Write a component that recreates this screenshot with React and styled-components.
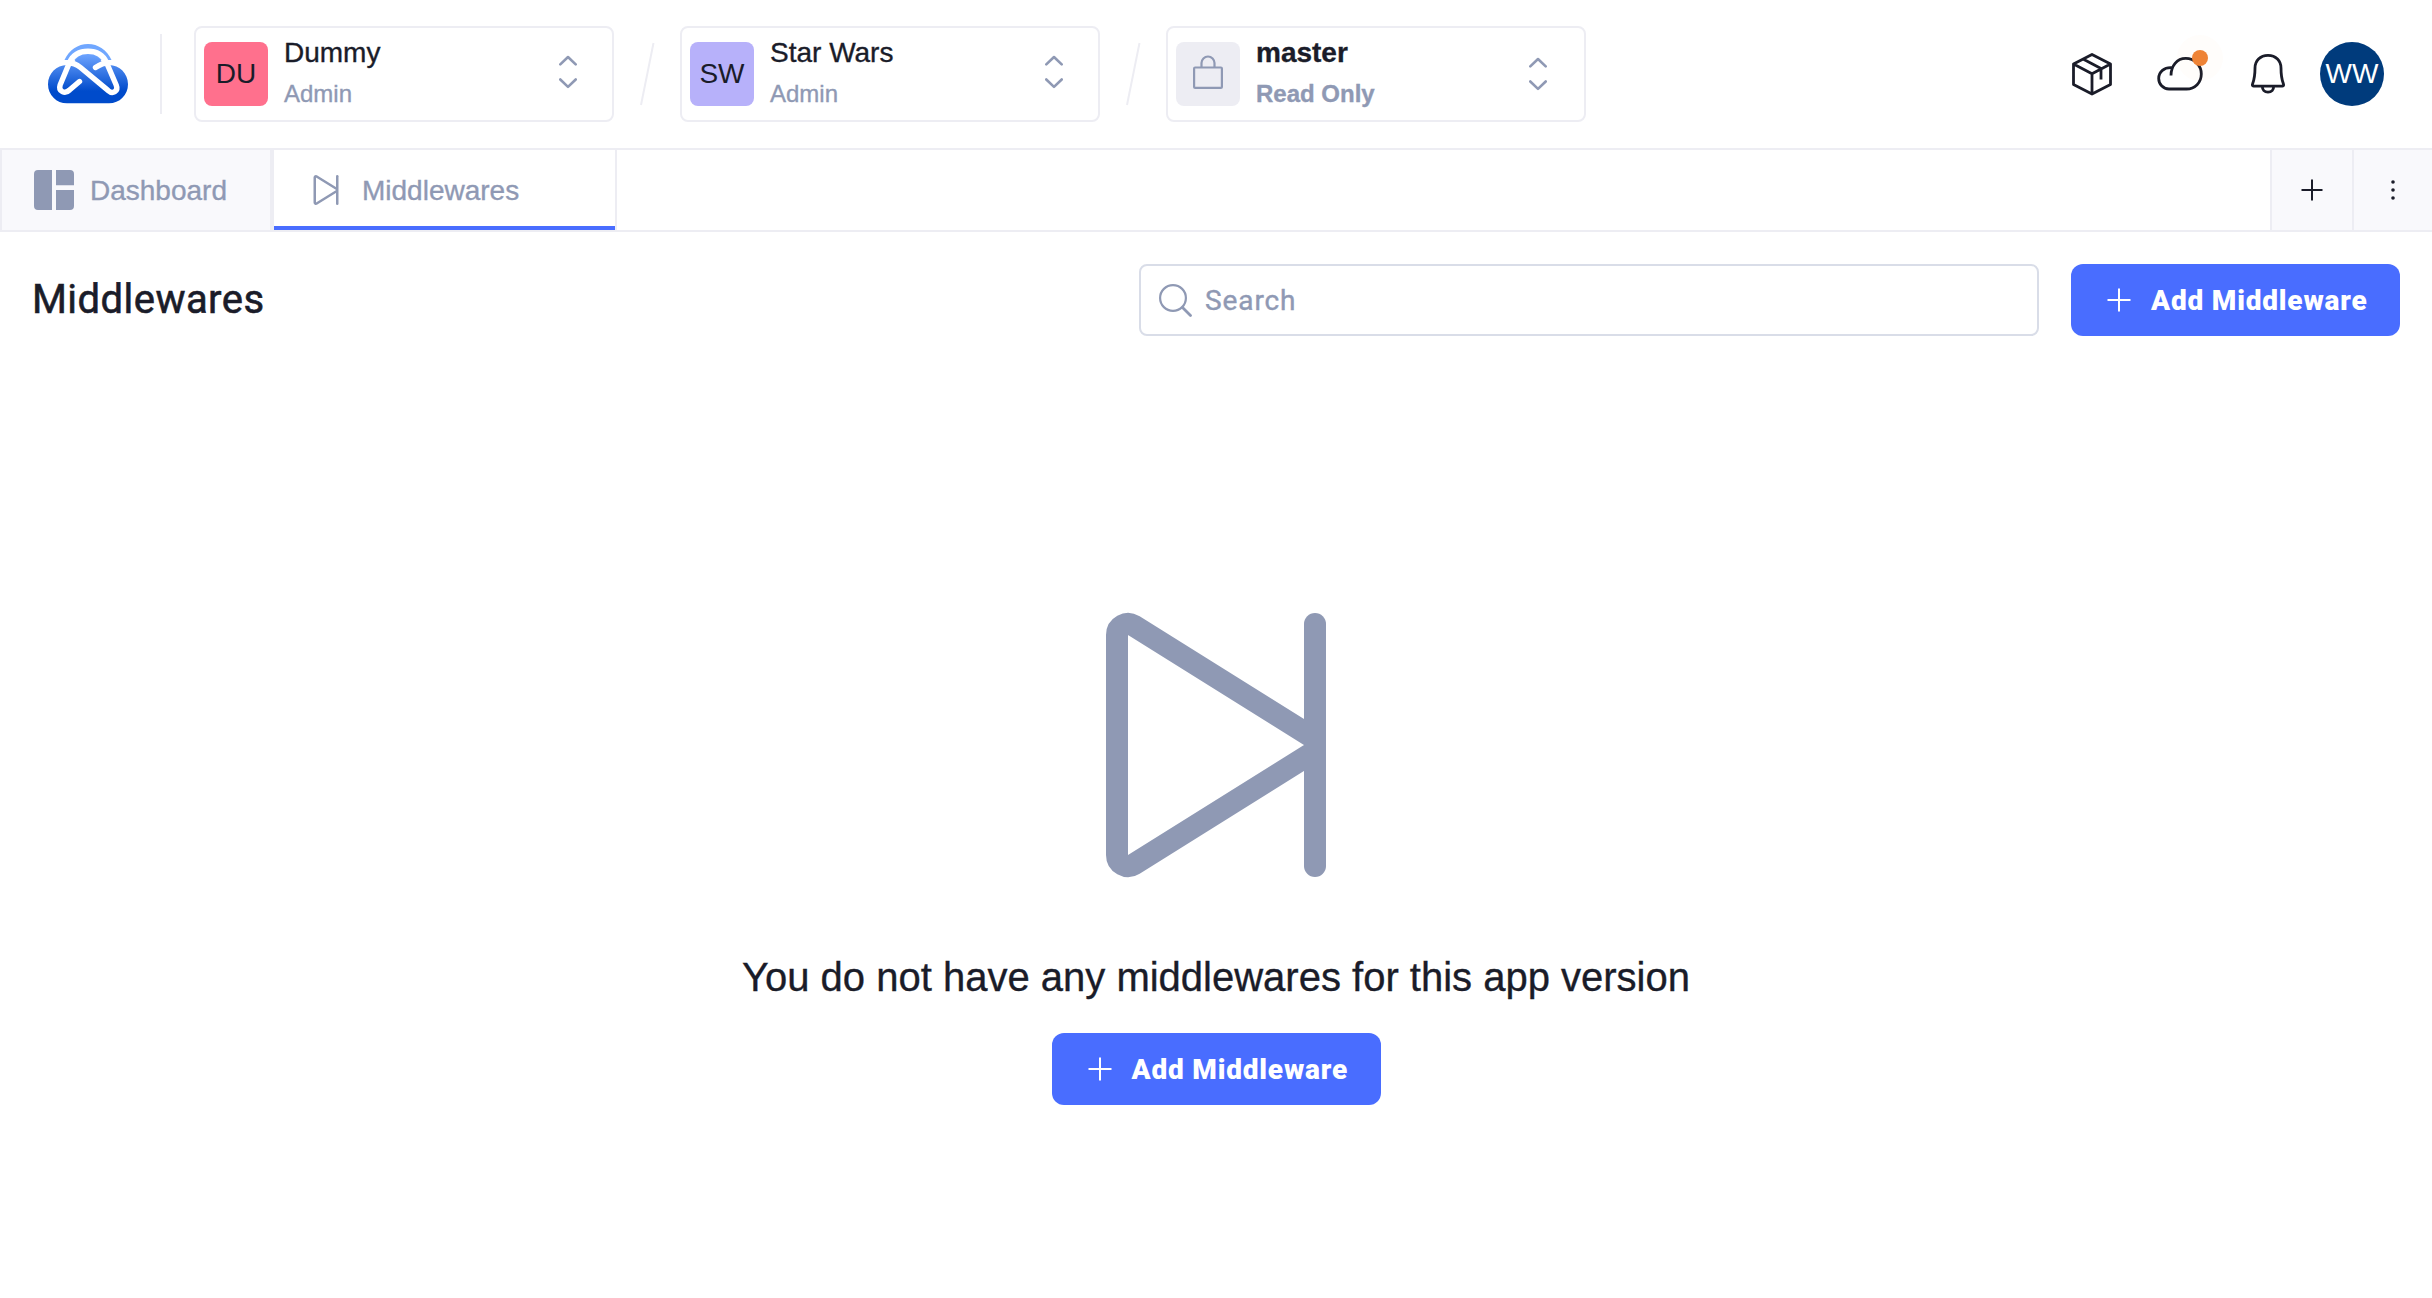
import React from "react";
import styled, { createGlobalStyle, css } from "styled-components";

const ink = "#1a1c29";
const muted = "#8f99b4";
const line = "#ededf3";
const panel = "#f9f9fc";
const blue = "#496dff";

const GlobalStyle = createGlobalStyle`
  *, *::before, *::after { box-sizing: border-box; }
  body {
    margin: 0;
    background: #fff;
    color: ${ink};
    font-family: "Liberation Sans", Helvetica, Arial, sans-serif;
    font-size: 28px;
    -webkit-font-smoothing: antialiased;
    -webkit-text-stroke: 0.35px currentColor;
  }
  button, input { font: inherit; color: inherit; }
`;

const Page = styled.div`
  display: flex;
  flex-direction: column;
  min-height: 100vh;
`;

const Header = styled.header`
  display: flex;
  align-items: center;
  height: 148px;
  padding: 0 48px;
`;

const Logo = styled.svg`
  display: block;
  width: 80px;
  height: 60px;
  flex: none;
`;

const Divider = styled.div`
  width: 2px;
  height: 80px;
  margin: 0 32px;
  background: ${line};
`;

const Slash = styled.svg`
  display: block;
  width: 66px;
  height: 64px;
  flex: none;
`;

const Selector = styled.button`
  display: flex;
  align-items: center;
  gap: 16px;
  width: 420px;
  height: 96px;
  padding: 0 ${(p) => (p.$strong ? 37 : 35)}px 0 8px;
  border: 2px solid ${line};
  border-radius: 8px;
  background: #fff;
  text-align: left;
  font-weight: ${(p) => (p.$strong ? 700 : 400)};
`;

const Badge = styled.span`
  display: flex;
  align-items: center;
  justify-content: center;
  width: 64px;
  height: 64px;
  flex: none;
  border-radius: ${(p) => (p.$round ? "50%" : "8px")};
  background: ${(p) => p.$bg};
  color: ${(p) => p.$fg || ink};
  font-size: 28px;
  font-weight: 400;
  -webkit-text-stroke: 0;
`;

const LockIcon = styled.svg`
  display: block;
  width: 30px;
  height: 34px;
  margin-bottom: 4px;
`;

const SelectorText = styled.span`
  display: flex;
  flex-direction: column;
  flex: 1;
  padding-bottom: 4px;
`;

const SelectorName = styled.span`
  font-size: 28px;
  line-height: 44px;
`;

const SelectorRole = styled.span`
  font-size: 24px;
  line-height: 38px;
  color: ${muted};
`;

const Chevrons = styled.svg`
  display: block;
  width: 18px;
  height: 34px;
  margin-top: ${(p) => (p.$strong ? 0 : -4)}px;
  flex: none;
`;

const Actions = styled.div`
  display: flex;
  align-items: center;
  margin-left: auto;
`;

const ActionIcon = styled.svg`
  display: block;
  width: 88px;
  height: 88px;
  flex: none;
`;

const Account = styled.div`
  margin-left: 8px;
`;

const TabBar = styled.nav`
  display: flex;
  height: 84px;
  border-top: 2px solid ${line};
  border-bottom: 2px solid ${line};
`;

const Tab = styled.div`
  display: flex;
  align-items: center;
  gap: 16px;
  padding: 0 32px;
  width: ${(p) => p.$width}px;
  border-left: 2px solid ${line};
  border-right: 2px solid ${line};
  color: ${muted};
  background: ${panel};
  ${(p) =>
    p.$active &&
    css`
      background: #fff;
      box-shadow: inset 0 -4px 0 ${blue};
    `}
`;

const TabLabel = styled.span`
  padding-top: 2px;
`;

const TabIcon = styled.svg`
  display: block;
  width: 40px;
  height: 40px;
  flex: none;
`;

const TabTools = styled.div`
  display: flex;
  margin-left: auto;
`;

const TabTool = styled.button`
  display: flex;
  align-items: center;
  justify-content: center;
  width: ${(p) => p.$width}px;
  padding: 0;
  border: 0;
  border-left: 2px solid ${line};
  background: ${panel};
`;

const Toolbar = styled.section`
  display: flex;
  align-items: center;
  gap: 32px;
  padding: 32px 32px 0;
`;

const Title = styled.h1`
  flex: 1;
  margin: 0;
  font-family: Roboto, sans-serif;
  font-size: 40px;
  line-height: 48px;
  font-weight: 400;
  letter-spacing: 0.45px;
  -webkit-text-stroke: 0.6px currentColor;
`;

const SearchBox = styled.label`
  display: flex;
  align-items: center;
  gap: 13px;
  width: 900px;
  height: 72px;
  padding: 0 18px;
  border: 2px solid #d9dde8;
  border-radius: 8px;
`;

const SearchIcon = styled.svg`
  display: block;
  width: 33px;
  height: 33px;
  flex: none;
`;

const SearchInput = styled.input`
  flex: 1;
  padding: 0;
  border: 0;
  outline: 0;
  background: transparent;
  font-family: Roboto, sans-serif;
  font-size: 28px;
  font-weight: 400;
  letter-spacing: 0.9px;
  -webkit-text-stroke: 0.4px ${muted};
  &::placeholder { color: ${muted}; opacity: 1; }
`;

const PrimaryButton = styled.button`
  display: flex;
  align-items: center;
  gap: 20px;
  width: 329px;
  height: 72px;
  padding: 0 0 0 36px;
  border: 0;
  border-radius: 12px;
  background: ${blue};
  color: #fff;
  font-family: Roboto, sans-serif;
  font-size: 28px;
  font-weight: 900;
  letter-spacing: 0.82px;
  -webkit-text-stroke: 0;
  white-space: nowrap;
`;

const Plus = styled.svg`
  display: block;
  width: ${(p) => p.$size}px;
  height: ${(p) => p.$size}px;
  flex: none;
`;

const Empty = styled.main`
  display: flex;
  flex-direction: column;
  align-items: center;
  padding-top: 233px;
`;

const EmptyIcon = styled.svg`
  display: block;
  width: 352px;
  height: 352px;
`;

const EmptyText = styled.p`
  margin: 32px 0;
  font-size: 40px;
  line-height: 48px;
`;

const SkipShape = () => (
  <g fill="none" stroke={muted} strokeWidth="1" strokeLinecap="round">
    <path d="M12.5 7.723 4.265 2.576A.5.5 0 0 0 3.5 3v10a.5.5 0 0 0 .765.424L12.5 8.277" strokeLinecap="butt" />
    <path d="M12.5 2.5v11" />
  </g>
);

const PlusIcon = ({ color = "#fff", size = 24 }) => (
  <Plus $size={size} viewBox={`0 0 ${size} ${size}`}>
    <path
      d={`M${size / 2} .5v${size - 1}M.5 ${size / 2}h${size - 1}`}
      stroke={color}
      strokeWidth="2"
      fill="none"
    />
  </Plus>
);

const UpDown = ({ strong }) => (
  <Chevrons $strong={strong} viewBox="0 0 18 34">
    <path
      d="M1.3 9.4 9 2l7.7 7.4M1.3 24.5 9 31.9l7.7-7.4"
      fill="none"
      stroke={muted}
      strokeWidth="2.6"
      strokeLinecap="round"
      strokeLinejoin="round"
    />
  </Chevrons>
);

const SlashMark = () => (
  <Slash viewBox="0 0 66 64">
    <path d="M27 63 39.5 1" stroke={line} strokeWidth="2" fill="none" />
  </Slash>
);

const LogoMark = () => (
  <Logo viewBox="0 0 80 60">
    <defs>
      <linearGradient id="cloud" gradientUnits="userSpaceOnUse" x1="40" y1="10" x2="40" y2="47">
        <stop offset="0" stopColor="#6ea4ff" />
        <stop offset="1" stopColor="#004bcb" />
      </linearGradient>
    </defs>
    <path d="M16.5 16C21 6 30 0 40 0s19 6 23.5 16Z" fill="#70a7ff" />
    <path
      d="M24.5 21C27 14.5 33 10 40 10s13 4.500 15.500 11H61c10.500 0 19 8.500 19 19.200S71.500 59.300 61 59.300H19C8.500 59.300 0 51 0 40.200S8.500 21 19 21Z"
      fill="url(#cloud)"
    />
    <g fill="none" stroke="#fff" strokeWidth="5.4" strokeLinecap="round" strokeLinejoin="round">
      <path d="M47.5 23.5C52 20.5 56 18.8 61 18.8" />
      <path d="M31.5 37.5 21.5 46c-4.500 4.500-11.500 1.500-9.400-5L21.500 18.500C25 11 31.500 7.300 40 7.300s15 3.700 18.500 11.200l9.700 22.500c2.600 6.500-3.600 9.500-8.200 5.400L32.500 23.500C28.500 20.300 24 18.800 19.500 18.800" />
    </g>
  </Logo>
);

const Workspace = ({ code, bg, name, role }) => (
  <Selector>
    <Badge $bg={bg}>{code}</Badge>
    <SelectorText>
      <SelectorName>{name}</SelectorName>
      <SelectorRole>{role}</SelectorRole>
    </SelectorText>
    <UpDown />
  </Selector>
);

const AddButton = () => (
  <PrimaryButton>
    <PlusIcon />
    Add Middleware
  </PrimaryButton>
);

export default function App() {
  return (
    <Page>
      <GlobalStyle />
      <Header>
        <LogoMark />
        <Divider />
        <Workspace code="DU" bg="#ff708d" name="Dummy" role="Admin" />
        <SlashMark />
        <Workspace code="SW" bg="#b7b1fa" name="Star Wars" role="Admin" />
        <SlashMark />
        <Selector $strong>
          <Badge $bg={line}>
            <LockIcon viewBox="0 0 30 34">
              <g fill="none" stroke={muted} strokeWidth="2.2" strokeLinejoin="round">
                <rect x="1.1" y="12.5" width="27.8" height="20.4" rx="1" />
                <path d="M8.5 12.5V8a6.5 6.5 0 0 1 13 0v4.5" />
              </g>
            </LockIcon>
          </Badge>
          <SelectorText>
            <SelectorName>master</SelectorName>
            <SelectorRole>Read Only</SelectorRole>
          </SelectorText>
          <UpDown strong />
        </Selector>
        <Actions>
          <ActionIcon viewBox="0 0 88 88">
            <path
              d="M44 24.5 62.5 34v20.5L44 64 25.5 54.5V34ZM25.5 34 44 43.8 62.5 34M44 43.8V64M35 29l18 9.5V49.5"
              fill="none"
              stroke={ink}
              strokeWidth="2.8"
              strokeLinejoin="round"
            />
          </ActionIcon>
          <ActionIcon viewBox="0 0 88 88">
            <path
              d="M35 45.5C35 36 41 28.4 49.7 28.4A15.5 15.5 0 0 1 65.3 44C65.3 52.5 59 59 50.5 59H33C27 59 22.7 54 22.7 48.5 22.7 42 28 36.8 36.5 37.7"
              fill="none"
              stroke={ink}
              strokeWidth="2.8"
            />
            <circle cx="64" cy="28" r="23" fill="#ee8336" fillOpacity="0.02" />
            <circle cx="64" cy="28" r="8" fill="#ee8336" />
          </ActionIcon>
          <ActionIcon viewBox="0 0 88 88">
            <path
              d="M44 25.3c-8 0-13 5.8-13 12.7 0 7-.8 11.5-2.3 15.5-.6 1.6-.4 2.7.8 2.7h29c1.200 0 1.400-1.100.8-2.700-1.500-4-2.300-8.500-2.300-15.500 0-6.900-5-12.700-13-12.700ZM38.300 56.200c0 3.500 2.200 6 5.700 6s5.700-2.500 5.700-6"
              fill="none"
              stroke={ink}
              strokeWidth="2.8"
              strokeLinejoin="round"
            />
          </ActionIcon>
          <Account>
            <Badge $round $bg="#003b7c" $fg="#fff">WW</Badge>
          </Account>
        </Actions>
      </Header>

      <TabBar>
        <Tab $width={272}>
          <TabIcon viewBox="0 0 40 40" fill={muted}>
            <path d="M4 0h14v40H4a4 4 0 0 1-4-4V4a4 4 0 0 1 4-4ZM22 0h14a4 4 0 0 1 4 4v11.300H22ZM22 20h18v16a4 4 0 0 1-4 4H22Z" />
          </TabIcon>
          <TabLabel>Dashboard</TabLabel>
        </Tab>
        <Tab $width={345} $active>
          <TabIcon viewBox="0 0 16 16"><SkipShape /></TabIcon>
          <TabLabel>Middlewares</TabLabel>
        </Tab>
        <TabTools>
          <TabTool $width={82}><PlusIcon color={ink} size={22} /></TabTool>
          <TabTool $width={80}>
            <svg width="4" height="20" viewBox="0 0 4 20" fill={ink}>
              <circle cx="2" cy="2" r="1.8" />
              <circle cx="2" cy="10" r="1.8" />
              <circle cx="2" cy="18" r="1.8" />
            </svg>
          </TabTool>
        </TabTools>
      </TabBar>

      <Toolbar>
        <Title>Middlewares</Title>
        <SearchBox>
          <SearchIcon viewBox="0 0 33 33">
            <g fill="none" stroke={muted} strokeWidth="2.2">
              <circle cx="14" cy="14" r="12.9" />
              <path d="m23.5 23.5 8 8" strokeWidth="2.8" strokeLinecap="round" />
            </g>
          </SearchIcon>
          <SearchInput placeholder="Search" />
        </SearchBox>
        <AddButton />
      </Toolbar>

      <Empty>
        <EmptyIcon viewBox="0 0 16 16"><SkipShape /></EmptyIcon>
        <EmptyText>You do not have any middlewares for this app version</EmptyText>
        <AddButton />
      </Empty>
    </Page>
  );
}
